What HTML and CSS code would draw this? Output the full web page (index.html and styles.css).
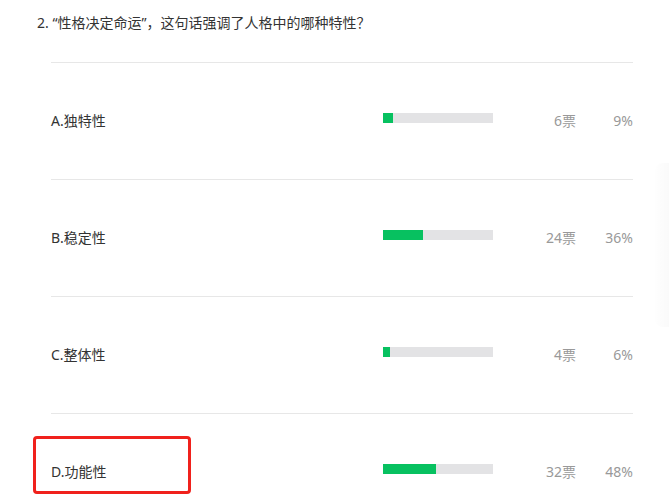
FILE: index.html
```
<!DOCTYPE html>
<html>
<head>
  <title>投票结果</title>
  <link rel="stylesheet" href="styles.css">
</head>
<body>
  <div class="question">2. “性格决定命运”，这句话强调了人格中的哪种特性？</div>
  <div class="options">
    <div class="option">
      <div class="label">A.独特性</div>
      <div class="bar"><div class="fill" style="width: 9%"></div></div>
      <div class="votes">6票</div>
      <div class="percent">9%</div>
    </div>
    <div class="option">
      <div class="label">B.稳定性</div>
      <div class="bar"><div class="fill" style="width: 36%"></div></div>
      <div class="votes">24票</div>
      <div class="percent">36%</div>
    </div>
    <div class="option">
      <div class="label">C.整体性</div>
      <div class="bar"><div class="fill" style="width: 6%"></div></div>
      <div class="votes">4票</div>
      <div class="percent">6%</div>
    </div>
    <div class="option marked">
      <div class="label">D.功能性</div>
      <div class="bar"><div class="fill" style="width: 48%"></div></div>
      <div class="votes">32票</div>
      <div class="percent">48%</div>
      <div class="highlight"></div>
    </div>
  </div>
  <div class="side-shade"></div>
</body>
</html>
```

FILE: styles.css
```
html, body {
  margin: 0;
  padding: 0;
  overflow: hidden;
}

body {
  background-color: #fff;
  font-family: "Noto Sans", "Noto Sans CJK SC", sans-serif;
  font-size: 14px;
  color: #333;
  position: relative;
  height: 502px;
}

.question {
  padding: 13px 0 0 37px;
  line-height: 20px;
  height: 49px;
}

.options {
  margin-left: 51px;
  width: 582px;
}

.option {
  position: relative;
  display: flex;
  align-items: center;
  height: 116px;
  border-top: 1px solid #e7e7e7;
  line-height: 20px;
}

.label {
  flex: 0 0 332px;
  color: #333;
}

.bar {
  flex: 0 0 110px;
  height: 10px;
  margin-top: -6px;
  background-color: #e3e3e5;
}

.fill {
  height: 100%;
  background-color: #07c160;
}

.votes {
  flex: 0 0 83px;
  text-align: right;
  color: #999;
}

.percent {
  flex: 0 0 57px;
  text-align: right;
  color: #999;
}

.highlight {
  position: absolute;
  left: -18px;
  top: 22px;
  width: 152px;
  height: 52px;
  border: 3px solid #f0211c;
  border-radius: 4px;
}

.side-shade {
  position: absolute;
  right: 0;
  top: 163px;
  width: 14px;
  height: 164px;
  border-radius: 8px 0 0 8px;
  background: linear-gradient(to right, rgba(0, 0, 0, 0.005), rgba(0, 0, 0, 0.02));
}
```
